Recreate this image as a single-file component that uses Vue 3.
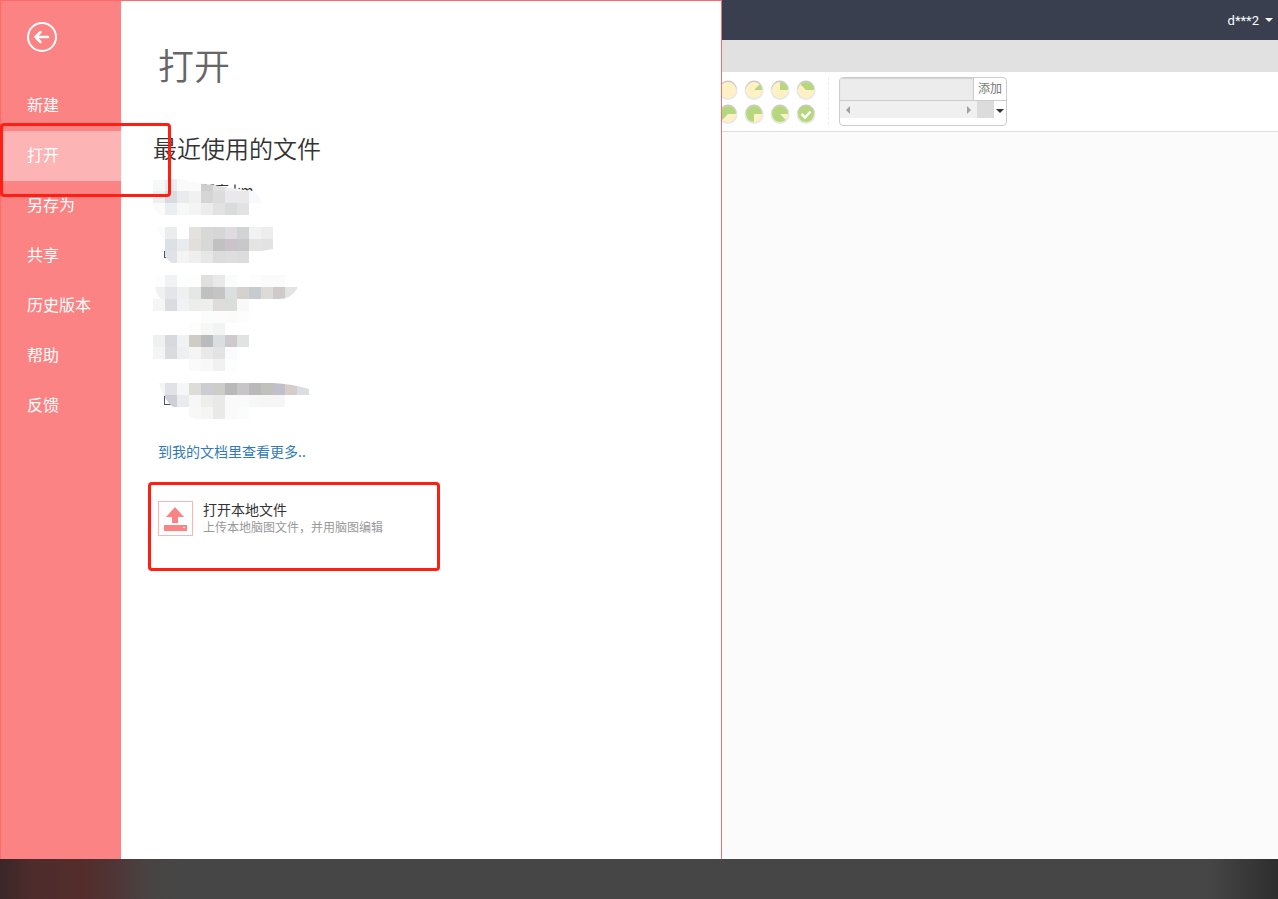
<script setup>
const menu = ['新建', '打开', '另存为', '共享', '历史版本', '帮助', '反馈']
const current = '打开'

// Each file preview is a grid of 12px cells; '-' leaves a cell empty.
const files = [
  {
    id: 'f1',
    name: '版高.km',
    clip: 'M2 1 L28 0 Q44 5 60 6 Q84 10 100 12 Q107 15 108 24 L96 24 V36 H8 Q2 32 0 26 V1 Z',
    rows: [
      'f6f8f7 eaecee fafafa fbfbfb cfcdce e0e0e0 eeeeee f4f4f4 fafafa',
      'efeff1 d9dbe1 e9ebed f1f1f1 d6d5d6 dcdcdc e9e8ec eae8e8 f8f9fc',
      'fbfbfb ebeef1 f7f9f8 f5f4f2 ececec e2e2e2 dadcdc e1e2e3',
    ],
  },
  {
    id: 'f2',
    mark: 23,
    clip: 'M4 0 H120 V22 L108 24 L96 26 V36 H19 Q12 32 10 24 L11 12 Q6 8 4 0 Z',
    rows: [
      'fbfbfb eaecee - e4e2df d9d8d8 d6d6d6 dedce0 d2d3d6 f2f2f2 ededed',
      'fcfcfc dde1e6 e9ecef e2dfdb d9d8d8 c1c1c1 cbc3c9 c8c8ca e6e4e2 e2e2e2',
      '- dfe2e6 f4f4f4 efefef e6e7e6 dcdcdc dededf dcdcdd',
    ],
  },
  {
    id: 'f3',
    clip: 'M4 0 H144 V14 Q138 24 126 24 H96 V48 H48 V36 H0 V24 H8 Q2 18 2 8 Z',
    rows: [
      'fdfdfd f1f2f4 fdfefe fefefc e0e0e0 e9e9e9 f9fcfb - fdfdfd fbfbfb fbfbfb',
      'eff0f2 e3e5e9 eff1f1 e5e6e6 c0c0c0 c5c4c4 dddedf d5d1ce c6cbd0 dcdbda d0caca e2e4e4',
      'f5f5f5 dadce1 f1f2f5 eceeec eeeeec e0dbdb dbdddb f9f9fc',
      '- - - - fcfcfc fcfcfc fbfbf9 fdfdfd',
    ],
  },
  {
    id: 'f4',
    clip: 'M0 0 H156 V48 H0 Z',
    rows: [
      '- - - fdfdfd f7f7f5 f2f4f3',
      'eff0f1 d6d9de f0f2f4 cfcbc5 b9bbbf dadee0 cec9cc e1e3e3',
      'f3f4f5 dadbdf eeeff1 f4f4f4 e9e9e9 e3e3e3 f9fbfe',
      '- - - fafafa f8f8f8 f1f1f1 fcfefe',
    ],
  },
  {
    id: 'f5',
    mark: 26,
    clip: 'M6 12 H120 Q140 13 156 18 V24 H132 V36 H96 V48 H42 L36 45 V36 H20 Q10 28 6 12 Z',
    rows: [
      '-',
      'f4f5f5 e0e2e6 f4f6f8 dddcd7 cccdd2 cccdc8 b9b9b9 c7c5c8 b9b9b9 c0c0bc c1bfcb d6cccb d9dfe0',
      '- cdd0d6 eaebee f7f7f7 ededea e9e9e9 fafafa fafafa f7f7f7 f6f6f6 f6f6f6',
      '- - - f8f8f6 f5f5f3 e9e9e7 fafafa fbfcfe',
    ],
  },
].map((file) => ({
  ...file,
  cells: file.rows.flatMap((row, r) =>
    row
      .split(' ')
      .map((c, i) => ({ x: i * 12, y: r * 12, fill: '#' + c }))
      .filter((cell) => cell.fill !== '#-'),
  ),
}))

// Progress pies: wedge from `from` to `to`, in eighths clockwise from the top.
const point = (eighth) => {
  const a = (eighth * Math.PI) / 4
  return `${(10 + 8 * Math.sin(a)).toFixed(2)} ${(10 - 8 * Math.cos(a)).toFixed(2)}`
}
const wedge = (from, to) =>
  `M10 10 L${point(from)} A8 8 0 ${to - from > 4 ? 1 : 0} 1 ${point(to)} Z`
const pies = [
  { label: '0/8', d: '' },
  { label: '1/8', d: wedge(1, 2) },
  { label: '2/8', d: wedge(0, 2) },
  { label: '3/8', d: wedge(-1, 2) },
  { label: '5/8', d: wedge(-3, 2) },
  { label: '6/8', d: wedge(-4, 2) },
  { label: '7/8', d: wedge(-5, 2) },
  { label: '8/8', d: '', done: true },
]
</script>

<template>
  <div class="page">
    <div class="window">
      <section class="backstage">
        <nav class="side">
          <button class="back" type="button" aria-label="返回">
            <svg width="30" height="30" viewBox="0 0 30 30" fill="none" stroke="#fff">
              <circle cx="15" cy="15" r="14" stroke-width="2" />
              <path d="M8.500 15H21M13.500 10L8.500 15L13.500 20" stroke-width="2.500" stroke-linecap="round" stroke-linejoin="round" />
            </svg>
          </button>
          <ul class="menu">
            <li v-for="item in menu" :key="item" class="entry">
              <button type="button" class="item" :class="{ active: item === current }">{{ item }}</button>
              <span v-if="item === current" class="marker"></span>
            </li>
          </ul>
        </nav>

        <main class="content">
          <h1>打开</h1>
          <h2>最近使用的文件</h2>
          <ul class="files">
            <li v-for="file in files" :key="file.id">
              <button type="button" class="file" aria-label="文件">
                <span v-if="file.name" class="name">{{ file.name }}</span>
                <svg class="mosaic" width="156" height="48" viewBox="0 0 156 48">
                  <clipPath :id="file.id"><path :d="file.clip" /></clipPath>
                  <rect v-if="file.mark" x="11.5" :y="file.mark - 0.5" width="9" height="8" fill="none" stroke="#46546f" />
                  <g :clip-path="`url(#${file.id})`" shape-rendering="crispEdges">
                    <rect v-for="(cell, i) in file.cells" :key="i" :x="cell.x" :y="cell.y" width="12" height="12" :fill="cell.fill" />
                  </g>
                </svg>
              </button>
            </li>
          </ul>
          <a class="more" href="#">到我的文档里查看更多..</a>
          <div class="local">
            <button type="button" class="upload">
              <span class="upload-icon">
                <svg width="33" height="33" viewBox="0 0 33 33" fill="#fc8383">
                  <path d="M16 5L25 15H19V21H13V15H7Z" />
                  <path fill-rule="evenodd" d="M5 23H28V29H5ZM24 25V26H26V25Z" />
                </svg>
              </span>
              <span class="upload-text">
                <span class="title">打开本地文件</span>
                <span class="hint">上传本地脑图文件，并用脑图编辑</span>
              </span>
            </button>
          </div>
        </main>
      </section>

      <section class="editor">
        <header class="topbar">
          <button type="button" class="user">d***2<span class="caret"></span></button>
        </header>
        <div class="tabs"></div>
        <div class="toolbar">
          <div class="pies">
            <button v-for="pie in pies" :key="pie.label" type="button" class="pie" :aria-label="pie.label">
              <svg width="20" height="20" viewBox="0 0 20 20">
                <circle cx="10" cy="10.500" r="9.500" fill="#e8e8e8" />
                <path d="M1.500 9A8.500 8.500 0 0 1 18.500 9" fill="#c8c8c8" />
                <circle cx="10" cy="10" r="8" :fill="pie.done ? '#b5d87f' : '#fff1c4'" />
                <path v-if="pie.d" :d="pie.d" fill="#b5d87f" />
                <path v-if="pie.done" d="M5.500 10L9 13.500L14.500 7.500" fill="none" stroke="#fff" stroke-width="2.500" />
              </svg>
            </button>
          </div>
          <div class="divider"></div>
          <div class="resource">
            <div class="resource-row">
              <input class="resource-input" type="text" aria-label="资源" />
              <button type="button" class="add">添加</button>
            </div>
            <div class="resource-row">
              <div class="scroll">
                <svg width="4" height="8" viewBox="0 0 4 8" fill="#a0a0a0"><path d="M4 0V8L0 4Z" /></svg>
                <svg width="4" height="8" viewBox="0 0 4 8" fill="#a0a0a0"><path d="M0 0V8L4 4Z" /></svg>
              </div>
              <div class="corner"></div>
              <button type="button" class="drop" aria-label="展开"><span class="caret"></span></button>
            </div>
          </div>
        </div>
        <div class="canvas"></div>
      </section>
    </div>
    <footer class="dock"></footer>
  </div>
</template>

<style>
body {
  margin: 0;
}
</style>

<style scoped>
* {
  box-sizing: border-box;
}
.page {
  display: flex;
  flex-direction: column;
  min-height: 100vh;
  font-family: "Noto Sans CJK SC", sans-serif;
  font-size: 14px;
  color: #333;
}
button {
  padding: 0;
  border: 0;
  background: none;
  font: inherit;
  color: inherit;
  text-align: left;
  cursor: pointer;
}
ul {
  margin: 0;
  padding: 0;
  list-style: none;
}
svg {
  display: block;
}
.window {
  display: flex;
  flex: 1;
}
.backstage {
  display: flex;
  flex: 0 0 722px;
  border: 1px solid #ff6b6b;
  border-bottom: 0;
  background: #fff;
}
.side {
  flex: 0 0 120px;
  background: #fc8383;
  color: #fff;
}
.back {
  display: block;
  margin: 21px 26px 29px;
}
.entry {
  position: relative;
}
.item {
  display: block;
  width: 100%;
  height: 50px;
  padding: 0 0 4px 26px;
  font-size: 16px;
  line-height: 24px;
}
.item.active {
  background: #fcb4b4;
}
.marker {
  position: absolute;
  z-index: 2;
  top: -8px;
  left: -1px;
  width: 171px;
  height: 74px;
  border: 3px solid #ff1e14;
  border-radius: 4px;
  pointer-events: none;
}
.content {
  flex: 1;
  padding: 38px 27px;
}
h1 {
  margin: 0;
  padding-left: 10px;
  font-size: 36px;
  font-weight: 350;
  line-height: 50px;
  color: #666;
}
h2 {
  margin: 42px 0 14px;
  padding-left: 5px;
  font-size: 24px;
  font-weight: 350;
  line-height: 34px;
}
.files {
  padding-left: 5px;
}
.file {
  display: block;
  position: relative;
  width: 100%;
  height: 48px;
}
.name {
  position: absolute;
  top: 1px;
  left: 48px;
  line-height: 20px;
}
.mosaic {
  position: relative;
}
.more {
  display: block;
  margin-top: 22px;
  padding-left: 10px;
  line-height: 20px;
  color: #337ab7;
  text-decoration: none;
}
.local {
  width: 292px;
  height: 89px;
  margin-top: 21px;
  padding: 16px 7px;
  border: 3px solid #ff1e14;
  border-radius: 4px;
}
.upload {
  display: flex;
  gap: 10px;
}
.upload-icon {
  border: 1px solid #fcb4b4;
}
.upload-text {
  display: flex;
  flex-direction: column;
}
.title {
  line-height: 17px;
}
.hint {
  font-size: 12px;
  line-height: 17px;
  color: #999;
}
.editor {
  display: flex;
  flex: 1;
  flex-direction: column;
  min-width: 0;
  overflow: hidden;
}
.topbar {
  display: flex;
  align-items: center;
  justify-content: flex-end;
  height: 40px;
  padding-right: 5px;
  background: #393f4f;
}
.user {
  display: flex;
  align-items: center;
  gap: 6px;
  font-family: Roboto, sans-serif;
  font-size: 13px;
  color: #fff;
}
.caret {
  border: 4px solid transparent;
  border-top-color: currentColor;
  border-bottom: 0;
}
.tabs {
  height: 32px;
  background: #e1e1e1;
}
.toolbar {
  display: flex;
  align-items: flex-start;
  height: 60px;
  padding-top: 5px;
  border-bottom: 1px solid #dcdcdc;
  background: #fff;
}
.pies {
  display: grid;
  grid-template-columns: repeat(4, 20px);
  gap: 4px 6px;
  margin: 3px 12px 0 -4px;
}
.divider {
  height: 48px;
  border-left: 1px dashed #eee;
}
.resource {
  width: 168px;
  height: 49px;
  margin-left: 10px;
  border: 1px solid #ccc;
  border-radius: 4px;
  overflow: hidden;
}
.resource-row {
  display: flex;
}
.resource-row:first-child {
  height: 23px;
  border-bottom: 1px solid #ccc;
}
.resource-input {
  flex: 1;
  min-width: 0;
  padding: 0 4px;
  border: 0;
  background: #ececec;
  box-shadow: inset 0 1px 1px #d4d4d4;
}
.add {
  width: 33px;
  padding-bottom: 3px;
  border-left: 1px solid #ccc;
  font-size: 12px;
  line-height: 18px;
  text-align: center;
  color: #777;
}
.scroll {
  display: flex;
  flex: 1;
  align-items: center;
  justify-content: space-between;
  height: 17px;
  padding: 0 6px;
  background: #f0f0f0;
}
.corner {
  width: 17px;
  height: 17px;
  background: #dcdcdc;
}
.drop {
  display: flex;
  align-items: center;
  justify-content: center;
  width: 12px;
  height: 20px;
}
.canvas {
  flex: 1;
  background: #fbfbfb;
}
.dock {
  height: 40px;
  background:
    linear-gradient(to right, transparent calc(100% - 70px), #2e2e2e),
    linear-gradient(to right, #3a2627, #4d2c2b 30px, #532d2c 85px, #4f3536 115px, #494444 150px, #464646 190px);
}
</style>
